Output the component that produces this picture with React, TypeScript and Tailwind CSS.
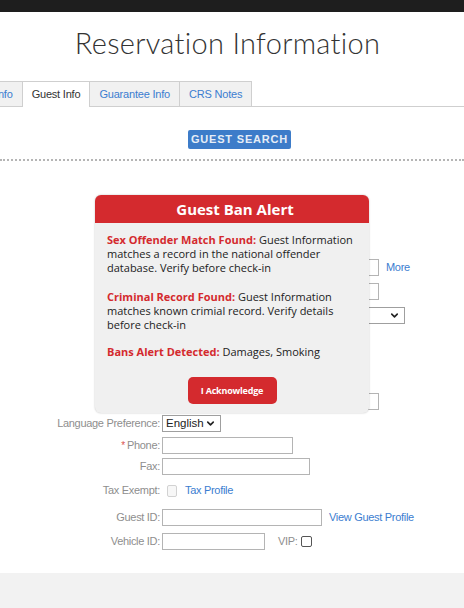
import { ChevronDown } from "lucide-react";

type RowProps = {
  label?: string;
  req?: boolean;
  className: string;
  children?: React.ReactNode;
};

function Row({ label, req, className, children }: RowProps) {
  return (
    <div className={`flex h-[17px] items-center ${className}`}>
      <div className="w-[160px] shrink-0 text-right text-[11px] leading-[17px] tracking-[-0.3px] text-[#8e8e8e]">
        {req && <span className="mr-[2px] text-[10px] text-[#d9534f]">*</span>}
        {label}
      </div>
      <div className="ml-[2px] flex h-full items-center">{children}</div>
    </div>
  );
}

function Input({ w }: { w: string }) {
  return <div className={`h-[17px] border border-[#b4b4b4] bg-white ${w}`} />;
}

function FakeSelect({ w, value }: { w: string; value?: string }) {
  return (
    <div className={`flex h-[17px] items-center justify-between border border-[#9f9f9f] bg-white pl-[3px] pr-[4px] ${w}`}>
      <span className="text-[11.5px] leading-none text-[#222]">{value}</span>
      <ChevronDown size={11} strokeWidth={3.5} className="text-[#222]" />
    </div>
  );
}

export default function App() {
  return (
    <div
      className="relative flex h-[608px] w-full flex-col overflow-hidden bg-white"
      style={{ fontFamily: '"Liberation Sans", Arial, sans-serif' }}
    >
      <div className="h-[12px] bg-[#1e1e1e]" />

      {/* title */}
      <div className="flex h-[69px] items-center justify-center pb-[7px] pr-[9px]">
        <h1
          className="text-[29px] font-light tracking-[0.3px] text-[#333]"
          style={{ fontFamily: "Lato, sans-serif" }}
        >
          Reservation Information
        </h1>
      </div>

      {/* tabs */}
      <div className="flex h-[26px] border-b border-[#cfcfcf]">
        <div className="-ml-[39px] flex">
          <div className="flex items-center border border-b-0 border-[#cfcfcf] bg-[#f1f1f1] px-[9px] text-[11px] tracking-[-0.2px] text-[#3b7dd0]">
            Stay Info
          </div>
          <div className="-mb-px flex items-center border border-b-0 border-l-0 border-[#cfcfcf] bg-white px-[9px] text-[11px] tracking-[-0.2px] text-[#333]">
            Guest Info
          </div>
          <div className="flex items-center border border-b-0 border-l-0 border-[#cfcfcf] bg-[#f1f1f1] px-[9px] text-[11px] tracking-[-0.2px] text-[#3b7dd0]">
            Guarantee Info
          </div>
          <div className="flex items-center border border-b-0 border-l-0 border-[#cfcfcf] bg-[#f1f1f1] px-[9px] text-[11px] tracking-[-0.2px] text-[#3b7dd0]">
            CRS Notes
          </div>
        </div>
      </div>

      <div className="mt-[23px] flex justify-center pl-[15px]">
        <button className="h-[19px] w-[103px] rounded-[2px] bg-[#3d7cc9] text-[11px] font-bold tracking-[0.8px] text-[#e6edf7]">
          GUEST SEARCH
        </button>
      </div>

      <div className="mt-[10px] border-t-2 border-dotted border-[#b5b5b5]" />

      {/* form (upper rows sit under the alert) */}
      <div className="flex flex-col">
        <Row className="mt-[98px]">
          <Input w="w-[217px]" />
          <span className="ml-[7px] text-[11px] tracking-[-0.3px] text-[#3b7dd0]">More</span>
        </Row>
        <Row className="mt-[7px]">
          <Input w="w-[217px]" />
        </Row>
        <Row className="mt-[7px]">
          <FakeSelect w="w-[243px]" />
        </Row>
        <Row className="mt-[4px]">
          <Input w="w-[150px]" />
        </Row>
        <Row className="mt-[5px]">
          <Input w="w-[150px]" />
        </Row>
        <Row className="mt-[4px]">
          <Input w="w-[120px]" />
        </Row>
        <Row className="mt-[5px]">
          <Input w="w-[217px]" />
        </Row>
        <Row label="Language Preference:" className="mt-[5px]">
          <FakeSelect w="w-[59px]" value="English" />
        </Row>
        <Row label="Phone:" req className="mt-[5px]">
          <Input w="w-[131px]" />
        </Row>
        <Row label="Fax:" className="mt-[4px]">
          <Input w="w-[148px]" />
        </Row>
        <Row label="Tax Exempt:" className="mt-[7px]">
          <div className="ml-[5px] h-[12px] w-[10px] rounded-[2px] border border-[#d2d2d2] bg-[#f7f7f7]" />
          <span className="ml-[8px] text-[11px] tracking-[-0.3px] text-[#3b7dd0]">Tax Profile</span>
        </Row>
        <Row label="Guest ID:" className="mt-[10px]">
          <Input w="w-[160px]" />
          <span className="ml-[7px] text-[11px] tracking-[-0.3px] text-[#3b7dd0]">View Guest Profile</span>
        </Row>
        <Row label="Vehicle ID:" className="mt-[7px]">
          <Input w="w-[103px]" />
          <span className="ml-[13px] text-[11px] tracking-[-0.3px] text-[#8e8e8e]">VIP:</span>
          <div className="ml-[3px] h-[11px] w-[11px] rounded-[2px] border border-[#555] bg-white" />
        </Row>
      </div>

      <div className="mt-[23px] flex-1 bg-[#f2f2f2]" />

      {/* alert modal */}
      <div
        className="absolute left-[95px] top-[195px] flex h-[218px] w-[274px] flex-col overflow-hidden rounded-[6px] bg-[#f0f0f0] shadow-[0_0_2px_rgba(0,0,0,0.25)]"
        style={{ fontFamily: '"Open Sans", sans-serif' }}
      >
        <div className="flex h-[28px] items-center justify-center bg-[#d42a2e] pl-[6px] text-[15px] font-bold text-white">
          Guest Ban Alert
        </div>
        <div className="flex flex-1 flex-col px-[12px] pt-[10px] text-[11px] leading-[14px] text-[#222]">
          <p>
            <span className="font-bold text-[#d42a2e]">Sex Offender Match Found:</span> Guest Information
            matches a record in the national offender database. Verify before check-in
          </p>
          <p className="mt-[15px]">
            <span className="font-bold text-[#d42a2e]">Criminal Record Found:</span> Guest Information
            matches known crimial record. Verify details before check-in
          </p>
          <p className="mt-[13px]">
            <span className="font-bold text-[#d42a2e]">Bans Alert Detected:</span> Damages, Smoking
          </p>
          <div className="mt-auto mb-[9px] flex justify-center">
            <button className="h-[27px] w-[89px] rounded-[5px] bg-[#d42a2e] text-[9px] font-bold tracking-[-0.2px] text-white">
              I Acknowledge
            </button>
          </div>
        </div>
      </div>
    </div>
  );
}
